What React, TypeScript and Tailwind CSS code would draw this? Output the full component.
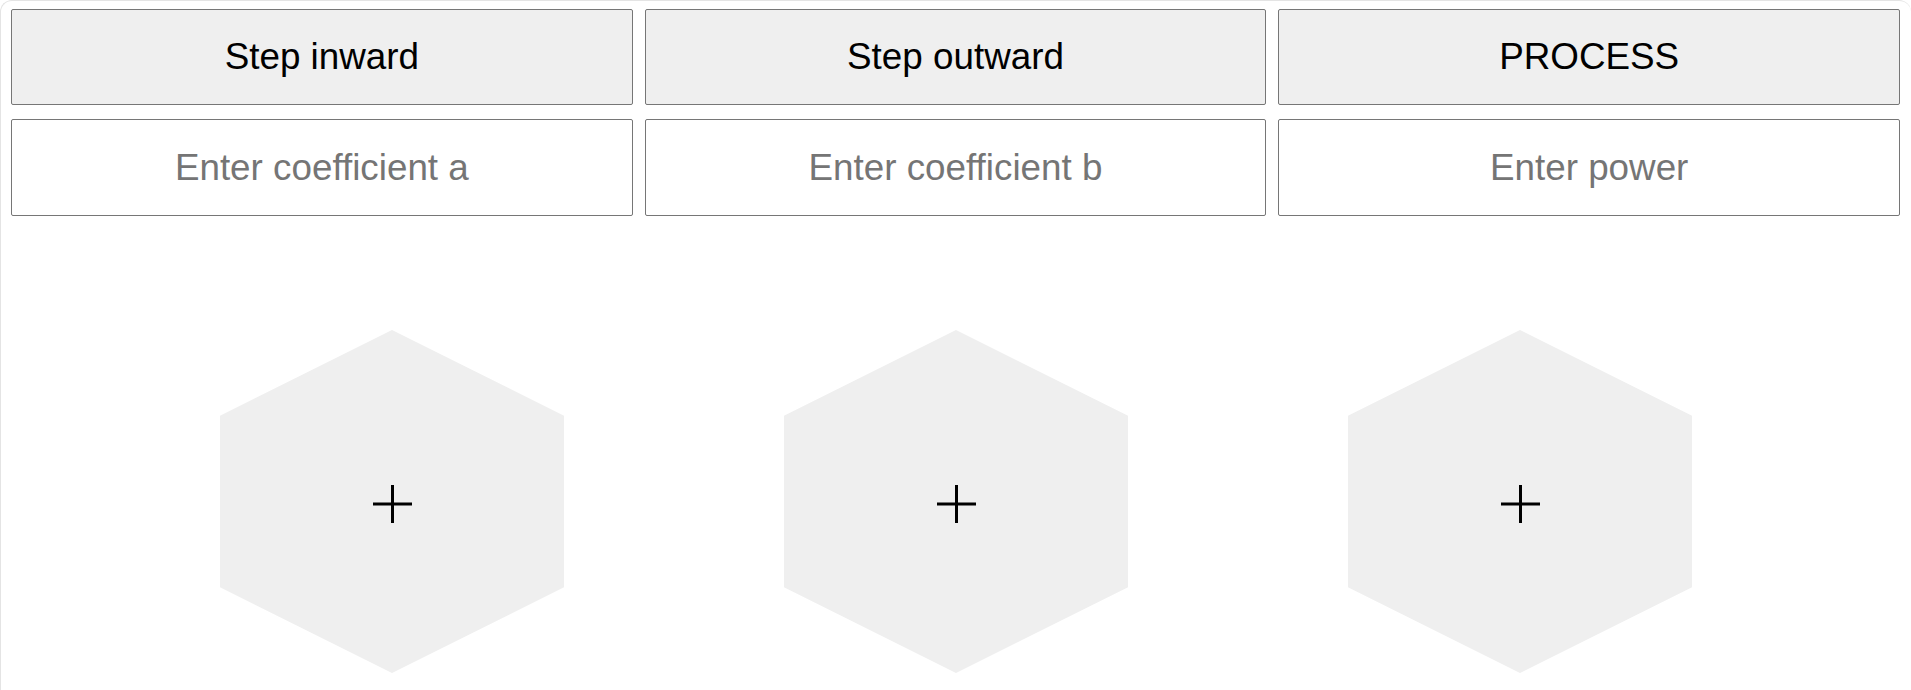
const BUTTONS = ["Step inward", "Step outward", "PROCESS"];
const INPUTS = ["Enter coefficient a", "Enter coefficient b", "Enter power"];

function Hexagon() {
  return (
    <button
      className="w-[344px] h-[343px] bg-[#efefef] flex items-center justify-center"
      style={{ clipPath: "polygon(50% 0, 100% 25%, 100% 75%, 50% 100%, 0 75%, 0 25%)" }}
      aria-label="Add"
    >
      <svg width="39" height="38" viewBox="0 0 39 38" className="mt-[5px]">
        <rect x="0" y="17.5" width="39" height="3" fill="#000" />
        <rect x="18" y="0" width="3" height="38" fill="#000" />
      </svg>
    </button>
  );
}

export default function App() {
  return (
    <div
      className="min-h-[690px] bg-white border-l border-t border-[#e4e4e4] rounded-tl-[12px] rounded-tr-[12px] pt-[8px] pl-[10px] pr-[11px] overflow-hidden"
      style={{ fontFamily: '"Liberation Sans", Arial, sans-serif' }}
    >
      <div className="grid grid-cols-3 gap-x-[12px] gap-y-[14px]">
        {BUTTONS.map((label) => (
          <button
            key={label}
            className="h-[96px] bg-[#efefef] border border-[#767676] rounded-[2px] text-[2.3rem] text-black"
          >
            {label}
          </button>
        ))}
        {INPUTS.map((ph) => (
          <input
            key={ph}
            placeholder={ph}
            className="h-[97px] bg-white border border-[#767676] rounded-[2px] text-[2.3rem] text-center text-black placeholder:text-[#757575] outline-none"
          />
        ))}
      </div>

      <div className="mt-[114px] flex justify-center gap-[220px] -ml-[10px] -mr-[11px]">
        <Hexagon />
        <Hexagon />
        <Hexagon />
      </div>
    </div>
  );
}
